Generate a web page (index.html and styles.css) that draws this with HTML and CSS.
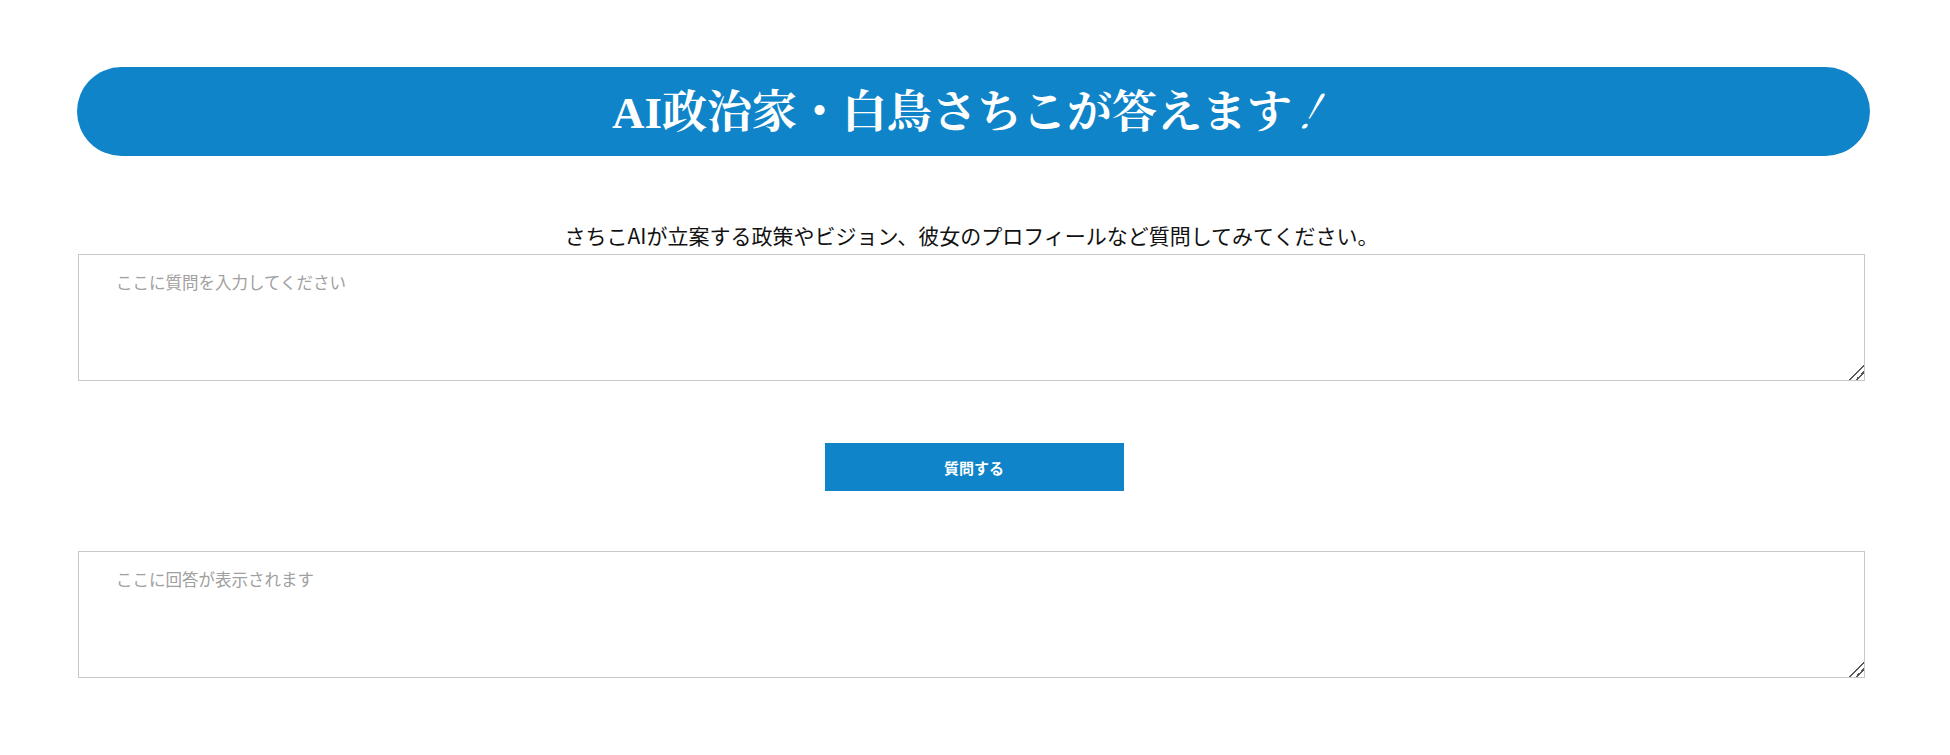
FILE: index.html
```html
<!DOCTYPE html>
<html lang="ja">
<head>
<meta charset="utf-8">
<title>AI政治家・白鳥さちこが答えます</title>
<link rel="stylesheet" href="styles.css">
</head>
<body>
<main class="wrap">
  <h1 class="title">AI政治家・白鳥さちこが答えます<span class="bang">！</span></h1>
  <p class="lead">さちこAIが立案する政策やビジョン、彼女のプロフィールなど質問してみてください。</p>
  <textarea class="box" placeholder="ここに質問を入力してください"></textarea>
  <div class="actions">
    <button class="ask" type="button">質問する</button>
  </div>
  <textarea class="box" placeholder="ここに回答が表示されます" readonly></textarea>
</main>
</body>
</html>
```

FILE: styles.css
```css
html, body {
  margin: 0;
  padding: 0;
  background: #ffffff;
}

body {
  font-family: "Noto Sans CJK JP", "Noto Sans", sans-serif;
  color: #111;
}

.wrap {
  width: 1793px;
  margin: 0 0 0 77px;
  padding-top: 67px;
  display: flex;
  flex-direction: column;
}

.title {
  margin: 0;
  height: 89px;
  background: #0f84c9;
  border-radius: 45px / 45px;
  color: #fff;
  display: flex;
  align-items: center;
  justify-content: center;
  font-family: "Liberation Serif", "Noto Serif CJK JP", "Noto Sans CJK JP", serif;
  font-weight: 700;
  font-size: 45px;
  letter-spacing: 0;
  line-height: 1;
  padding-top: 4px;
  padding-right: 4px;
  box-sizing: border-box;
}

.bang {
  font-style: italic;
  font-weight: 400;
  display: inline-block;
  margin-left: -6px;
  transform: skewX(-18deg);
}

.lead {
  margin: 64px 0 3px;
  text-align: center;
  font-size: 21px;
  line-height: 31px;
  color: #111;
  padding-right: 4px;
}

.box {
  display: block;
  width: 1787px;
  height: 127px;
  margin: 0 0 0 1px;
  box-sizing: border-box;
  border: 1px solid #c8c8c8;
  border-radius: 0;
  padding: 16px 37px;
  font-family: "Noto Sans CJK JP", "Noto Sans", sans-serif;
  font-size: 16.5px;
  line-height: 1.45;
  color: #333;
  background: #fff;
  outline: none;
}

.box::placeholder {
  color: #a0a0a0;
}

.box::-webkit-resizer {
  background:
    linear-gradient(135deg,
      transparent 0 48%,
      #555 48% 55%,
      transparent 55% 70%,
      #555 70% 77%,
      transparent 77% 100%);
}

.actions {
  display: flex;
  justify-content: center;
  padding: 62px 0 60px;
}

.ask {
  width: 299px;
  height: 48px;
  margin-left: 1px;
  border: none;
  border-radius: 0;
  background: #0f84c9;
  color: #fff;
  font-family: "Noto Sans CJK JP", "Noto Sans", sans-serif;
  font-weight: 700;
  font-size: 15px;
  cursor: pointer;
}
```
